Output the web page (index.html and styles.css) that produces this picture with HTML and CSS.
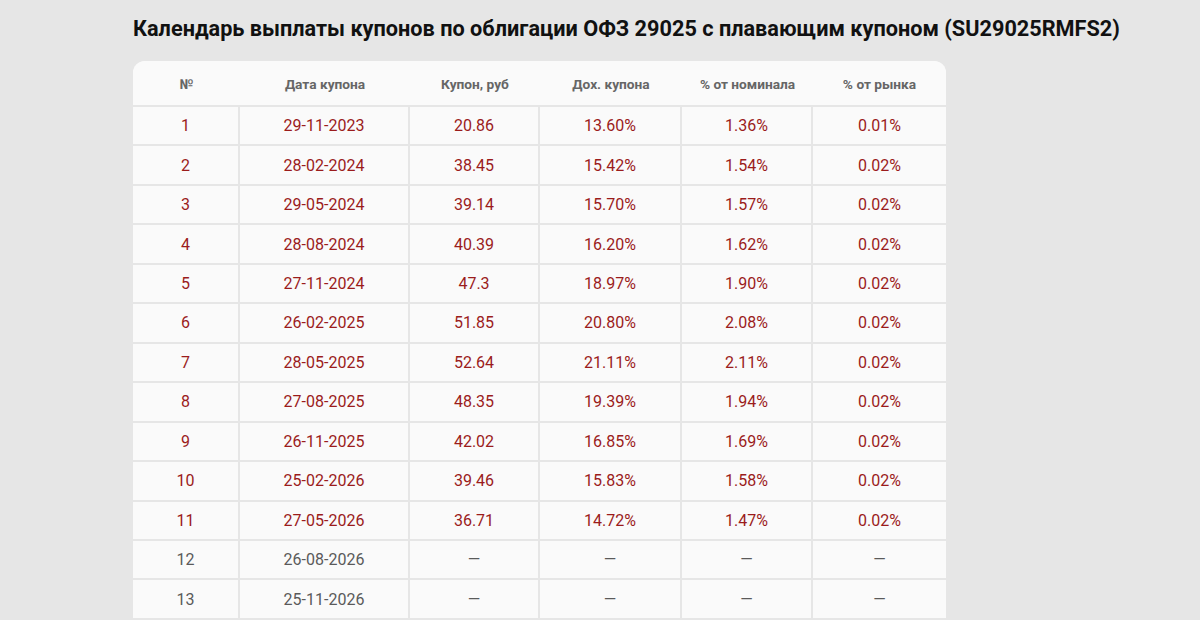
FILE: index.html
```html
<!DOCTYPE html>
<html lang="ru">
<head>
<meta charset="utf-8">
<link rel="stylesheet" href="styles.css">
</head>
<body>
<main class="page">
  <h1 class="title">Календарь выплаты купонов по облигации ОФЗ 29025 с плавающим купоном (SU29025RMFS2)</h1>
  <div class="card">
    <div class="row head">
      <div class="cell">№</div>
      <div class="cell">Дата купона</div>
      <div class="cell">Купон, руб</div>
      <div class="cell">Дох. купона</div>
      <div class="cell">% от номинала</div>
      <div class="cell">% от рынка</div>
    </div>
    <div class="row paid"><div class="cell">1</div><div class="cell">29-11-2023</div><div class="cell">20.86</div><div class="cell">13.60%</div><div class="cell">1.36%</div><div class="cell">0.01%</div></div>
    <div class="row paid"><div class="cell">2</div><div class="cell">28-02-2024</div><div class="cell">38.45</div><div class="cell">15.42%</div><div class="cell">1.54%</div><div class="cell">0.02%</div></div>
    <div class="row paid"><div class="cell">3</div><div class="cell">29-05-2024</div><div class="cell">39.14</div><div class="cell">15.70%</div><div class="cell">1.57%</div><div class="cell">0.02%</div></div>
    <div class="row paid"><div class="cell">4</div><div class="cell">28-08-2024</div><div class="cell">40.39</div><div class="cell">16.20%</div><div class="cell">1.62%</div><div class="cell">0.02%</div></div>
    <div class="row paid"><div class="cell">5</div><div class="cell">27-11-2024</div><div class="cell">47.3</div><div class="cell">18.97%</div><div class="cell">1.90%</div><div class="cell">0.02%</div></div>
    <div class="row paid"><div class="cell">6</div><div class="cell">26-02-2025</div><div class="cell">51.85</div><div class="cell">20.80%</div><div class="cell">2.08%</div><div class="cell">0.02%</div></div>
    <div class="row paid"><div class="cell">7</div><div class="cell">28-05-2025</div><div class="cell">52.64</div><div class="cell">21.11%</div><div class="cell">2.11%</div><div class="cell">0.02%</div></div>
    <div class="row paid"><div class="cell">8</div><div class="cell">27-08-2025</div><div class="cell">48.35</div><div class="cell">19.39%</div><div class="cell">1.94%</div><div class="cell">0.02%</div></div>
    <div class="row paid"><div class="cell">9</div><div class="cell">26-11-2025</div><div class="cell">42.02</div><div class="cell">16.85%</div><div class="cell">1.69%</div><div class="cell">0.02%</div></div>
    <div class="row paid"><div class="cell">10</div><div class="cell">25-02-2026</div><div class="cell">39.46</div><div class="cell">15.83%</div><div class="cell">1.58%</div><div class="cell">0.02%</div></div>
    <div class="row paid"><div class="cell">11</div><div class="cell">27-05-2026</div><div class="cell">36.71</div><div class="cell">14.72%</div><div class="cell">1.47%</div><div class="cell">0.02%</div></div>
    <div class="row future"><div class="cell">12</div><div class="cell">26-08-2026</div><div class="cell">—</div><div class="cell">—</div><div class="cell">—</div><div class="cell">—</div></div>
    <div class="row future"><div class="cell">13</div><div class="cell">25-11-2026</div><div class="cell">—</div><div class="cell">—</div><div class="cell">—</div><div class="cell">—</div></div>
  </div>
</main>
</body>
</html>
```

FILE: styles.css
```css
html, body {
  margin: 0;
  padding: 0;
  background: #e6e6e6;
  font-family: Roboto, "Liberation Sans", sans-serif;
}

.page {
  padding: 15px 0 0 133px;
  width: 1067px;
}

.title {
  margin: 0 0 19px 0;
  font-size: 21.7px;
  line-height: 27px;
  font-weight: 700;
  color: #111;
  white-space: nowrap;
}

.card {
  width: 813px;
  background: #e6e6e6;
  border-radius: 12px 12px 0 0;
  overflow: hidden;
  display: flex;
  flex-direction: column;
  row-gap: 2px;
}

.row {
  display: grid;
  grid-template-columns: 105px 168px 128px 140px 129px 133px;
  column-gap: 2px;
  height: 37.46px;
}

.cell {
  background: #fafafa;
  display: flex;
  align-items: center;
  justify-content: center;
  font-size: 16px;
}

.row.head {
  height: 44px;
  column-gap: 0;
  background: #fafafa;
  grid-template-columns: 107px 170px 130px 142px 131px 133px;
}

.row.head .cell {
  font-size: 13.7px;
  font-weight: 700;
  color: #666;
  padding-top: 1px;
}

.row.paid .cell {
  color: #9b1c1c;
}

.row.future .cell {
  color: #5a5a5a;
}
```
